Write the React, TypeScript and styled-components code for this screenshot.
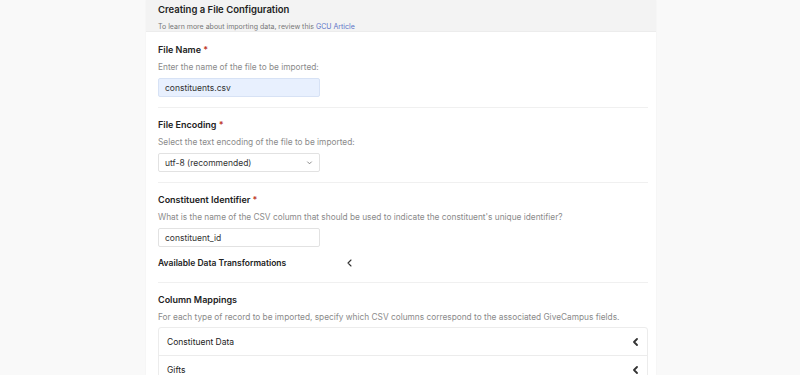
import React from "react";
import styled, { createGlobalStyle } from "styled-components";

const GlobalStyle = createGlobalStyle`
    html, body {
        margin: 0;
        padding: 0;
        background: #f9f9f9;
        font-family: Inter, "Liberation Sans", sans-serif;
        color: #222;
    }
`;

const Page = styled.div`
    width: 800px;
    height: 375px;
    overflow: hidden;
    display: flex;
    justify-content: flex-start;
    padding-left: 146px;
    box-sizing: border-box;
`;

const Card = styled.div`
    width: 510px;
    background: #ffffff;
    display: flex;
    flex-direction: column;
    box-shadow: 0 0 2px rgba(0, 0, 0, 0.04);
`;

const CardHeader = styled.div`
    background: #f3f3f3;
    height: 36px;
    padding: 4px 12px 0;
    box-sizing: border-box;
    border-bottom: 1px solid #ececec;
`;

const Title = styled.div`
    font-size: 9.5px;
    font-weight: 600;
    color: #222;
    line-height: 12px;
`;

const HeaderNote = styled.div`
    font-size: 7px;
    color: #777;
    margin-top: 6px;
    a {
        color: #5b73c7;
        text-decoration: none;
    }
`;

const Body = styled.div`
    padding: 0 8px 0 12px;
`;

const Section = styled.div<{ last?: boolean }>`
    padding: 12px 0 10px;
    border-bottom: ${(p) => (p.last ? "none" : "1px solid #f0f0f0")};
    & + & {
        padding-top: 11px;
    }
`;

const Label = styled.div`
    font-size: 9px;
    font-weight: 600;
    color: #222;
    line-height: 12px;
    span {
        color: #c0392b;
    }
`;

const Help = styled.div`
    font-size: 8.3px;
    color: #8a8a8a;
    margin-top: 5px;
    line-height: 12px;
`;

const Field = styled.div<{ filled?: boolean }>`
    width: 162px;
    height: 19px;
    margin-top: 5px;
    box-sizing: border-box;
    border: 1px solid ${(p) => (p.filled ? "#d7e2f5" : "#e2e2e2")};
    background: ${(p) => (p.filled ? "#e8f0fe" : "#ffffff")};
    border-radius: 2px;
    font-size: 8.5px;
    color: #333;
    display: flex;
    align-items: center;
    justify-content: space-between;
    padding: 0 6px;
`;

const Caret = styled.svg`
    width: 7px;
    height: 7px;
`;

const ToggleRow = styled.div`
    display: flex;
    align-items: center;
    margin-top: 11px;
    margin-bottom: 4px;
    font-size: 8.5px;
    font-weight: 600;
    color: #222;
`;

const Chevron = styled.svg`
    width: 7px;
    height: 8px;
    margin-left: 60px;
`;

const Accordion = styled.div`
    margin-top: 4px;
    border: 1px solid #ececec;
    border-radius: 3px;
`;

const AccordionRow = styled.div`
    height: 27px;
    display: flex;
    align-items: center;
    justify-content: space-between;
    padding: 0 8px;
    font-size: 8.5px;
    color: #222;
    border-bottom: 1px solid #ececec;
`;

const RowChevron = styled.svg`
    width: 7px;
    height: 8px;
`;

const LeftArrow = ({ bold }: { bold?: boolean }) => (
    <path
        d="M5 1 L2 4 L5 7"
        fill="none"
        stroke="#333"
        strokeWidth={bold ? 1.8 : 1.1}
        strokeLinecap="round"
        strokeLinejoin="round"
    />
);

const App: React.FC = () => {
    return (
        <>
            <GlobalStyle />
            <Page>
                <Card>
                    <CardHeader>
                        <Title>Creating a File Configuration</Title>
                        <HeaderNote>
                            To learn more about importing data, review this <a href="#">GCU Article</a>
                        </HeaderNote>
                    </CardHeader>
                    <Body>
                        <Section>
                            <Label>
                                File Name <span>*</span>
                            </Label>
                            <Help>Enter the name of the file to be imported:</Help>
                            <Field filled>constituents.csv</Field>
                        </Section>
                        <Section>
                            <Label>
                                File Encoding <span>*</span>
                            </Label>
                            <Help>Select the text encoding of the file to be imported:</Help>
                            <Field>
                                utf-8 (recommended)
                                <Caret viewBox="0 0 8 8">
                                    <path d="M1.5 3 L4 5.5 L6.5 3" fill="none" stroke="#777" strokeWidth="1" />
                                </Caret>
                            </Field>
                        </Section>
                        <Section>
                            <Label>
                                Constituent Identifier <span>*</span>
                            </Label>
                            <Help>
                                What is the name of the CSV column that should be used to indicate the
                                constituent's unique identifier?
                            </Help>
                            <Field>constituent_id</Field>
                            <ToggleRow>
                                Available Data Transformations
                                <Chevron viewBox="0 0 7 8">
                                    <LeftArrow />
                                </Chevron>
                            </ToggleRow>
                        </Section>
                        <Section last>
                            <Label>Column Mappings</Label>
                            <Help>
                                For each type of record to be imported, specify which CSV columns correspond to
                                the associated GiveCampus fields.
                            </Help>
                            <Accordion>
                                <AccordionRow>
                                    Constituent Data
                                    <RowChevron viewBox="0 0 7 8">
                                        <LeftArrow bold />
                                    </RowChevron>
                                </AccordionRow>
                                <AccordionRow>
                                    Gifts
                                    <RowChevron viewBox="0 0 7 8">
                                        <LeftArrow bold />
                                    </RowChevron>
                                </AccordionRow>
                            </Accordion>
                        </Section>
                    </Body>
                </Card>
            </Page>
        </>
    );
};

export default App;
